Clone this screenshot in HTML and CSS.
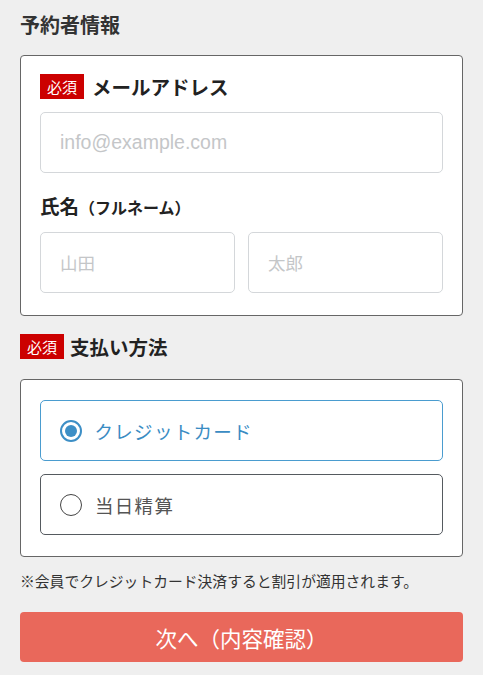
FILE: index.html
```html
<!DOCTYPE html>
<html lang="ja">
<head>
<meta charset="utf-8">
<title>予約者情報</title>
<link rel="stylesheet" href="styles.css">
</head>
<body>
<main class="page">
  <h2 class="section-title">予約者情報</h2>
  <section class="card info-card">
    <div class="field">
      <div class="label-row">
        <span class="badge">必須</span>
        <span class="label">メールアドレス</span>
      </div>
      <div class="input email-input"><span class="placeholder latin">info@example.com</span></div>
    </div>
    <div class="field name-field">
      <div class="label-row">
        <span class="label">氏名<span class="label-sub">（フルネーム）</span></span>
      </div>
      <div class="name-inputs">
        <div class="input"><span class="placeholder">山田</span></div>
        <div class="input"><span class="placeholder">太郎</span></div>
      </div>
    </div>
  </section>

  <div class="label-row pay-title">
    <span class="badge">必須</span>
    <span class="label">支払い方法</span>
  </div>
  <section class="card pay-card">
    <div class="option selected">
      <span class="radio"><span class="radio-dot"></span></span>
      <span class="option-text">クレジットカード</span>
    </div>
    <div class="option">
      <span class="radio"></span>
      <span class="option-text">当日精算</span>
    </div>
  </section>

  <p class="note">※会員でクレジットカード決済すると割引が適用されます。</p>

  <div class="button">次へ（内容確認）</div>
</main>
</body>
</html>
```
FILE: styles.css
```css
html, body {
  margin: 0;
  padding: 0;
  background: #efefef;
}
body {
  font-family: "Noto Sans CJK JP", "Noto Sans", sans-serif;
  color: #333;
}
.page {
  padding: 10px 20px 0;
}
.section-title {
  margin: 0;
  font-size: 20px;
  font-weight: 700;
  line-height: 30px;
  color: #333;
}
.card {
  background: #fff;
  border: 1px solid #666;
  border-radius: 4px;
  box-sizing: border-box;
}
.info-card {
  margin-top: 15px;
  padding: 18px 19px 22px;
}
.label-row {
  display: flex;
  align-items: center;
  gap: 8px;
  height: 25px;
}
.badge {
  background: #cc0000;
  color: #fff;
  font-size: 15px;
  line-height: 25px;
  height: 25px;
  padding: 0 7px;
  font-weight: 400;
}
.label {
  font-size: 19.5px;
  font-weight: 700;
  color: #222;
  line-height: 25px;
}
.label-sub {
  font-size: 16px;
}
.input {
  margin-top: 13px;
  height: 61px;
  box-sizing: border-box;
  border: 1px solid #d4d7da;
  border-radius: 5px;
  display: flex;
  align-items: center;
  padding: 0 19px;
  background: #fff;
}
.placeholder {
  color: #c4c6c8;
  font-size: 17.5px;
}
.placeholder.latin {
  font-family: "Liberation Sans", sans-serif;
  font-size: 19.5px;
}
.name-field {
  margin-top: 21px;
}
.name-inputs {
  display: grid;
  grid-template-columns: 1fr 1fr;
  gap: 13px;
}
.pay-title {
  margin-top: 18px;
  gap: 6px;
}
.pay-card {
  margin-top: 20px;
  padding: 20px 19px 21px;
  display: flex;
  flex-direction: column;
  gap: 13px;
}
.option {
  height: 61px;
  box-sizing: border-box;
  border: 1px solid #555a5f;
  border-radius: 5px;
  display: flex;
  align-items: center;
  padding: 0 19px;
  gap: 13px;
}
.option.selected {
  border: 1.5px solid #4a9ccf;
  padding-left: 18.5px;
}
.radio {
  width: 22px;
  height: 22px;
  box-sizing: border-box;
  border: 1.5px solid #444;
  border-radius: 50%;
  display: flex;
  align-items: center;
  justify-content: center;
  flex: none;
}
.selected .radio {
  border: 2px solid #3d8fc6;
}
.radio-dot {
  width: 12px;
  height: 12px;
  border-radius: 50%;
  background: #3d8fc6;
}
.option-text {
  font-size: 18.5px;
  letter-spacing: 1.3px;
  color: #555;
}
.selected .option-text {
  color: #3a8cc3;
}
.note {
  margin: 13px 0 0;
  font-size: 14.8px;
  line-height: 22px;
  color: #333;
}
.button {
  margin-top: 20px;
  height: 50px;
  border-radius: 4px;
  background: #e9685b;
  color: #fff;
  font-size: 21.5px;
  display: flex;
  align-items: center;
  justify-content: center;
}
```
